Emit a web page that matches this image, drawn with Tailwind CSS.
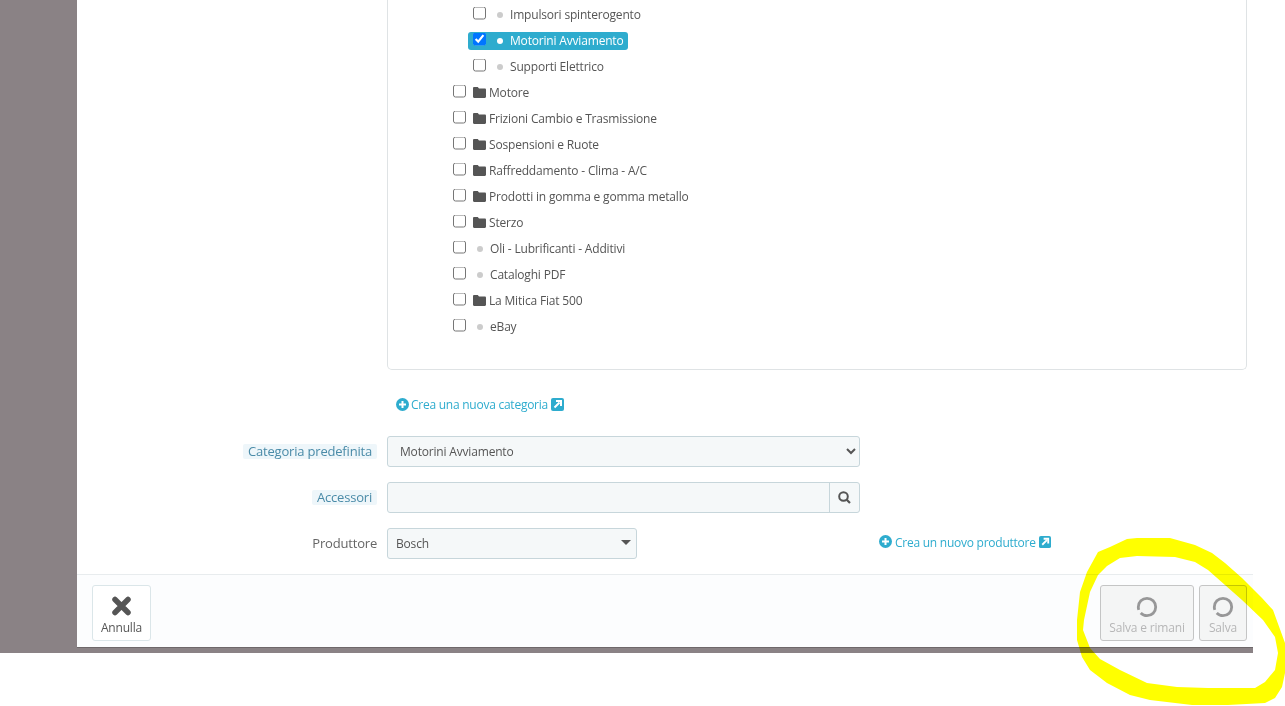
<!DOCTYPE html>
<html lang="it">
<head>
<meta charset="utf-8">
<title>Prodotto</title>
<script src="https://cdn.jsdelivr.net/npm/@tailwindcss/browser@4"></script>
</head>
<body class="bg-white">
<div class="relative h-[706px] w-[1285px] overflow-hidden bg-white font-['Open_Sans',sans-serif] text-[12px] tracking-[-0.18px] text-[#555]">
  <div class="h-[653px] w-[1253px] bg-[#8a8285] pl-[77px]">
    <div class="flex h-[647px] flex-col bg-white shadow-[0_1px_0_rgba(0,0,0,0.2)]">
      <div class="flex-1">
        <div class="ml-[310px] mr-[6px] h-[370px] rounded-b-[5px] border-x border-b border-[#dfe3e5] pt-[2px]">
          <div class="flex h-[26px] items-center pl-[85px]"><input type="checkbox" class="size-[13px] -translate-y-[2.5px]"><span class="ml-[11px] size-[6px] rounded-full bg-[#ccc]"></span><span class="ml-[7px]">Impulsori spinterogento</span></div>
          <div class="flex h-[26px] items-center pl-[80px]"><div class="relative flex h-[18px] items-center rounded-[3px] bg-[#2eacce] pl-[5px] pr-[4px] text-white"><input type="checkbox" checked class="size-[13px] -translate-y-[2.5px]"><span class="ml-[11px] size-[6px] rounded-full bg-white"></span><span class="ml-[7px]">Motorini Avviamento</span></div></div>
          <div class="flex h-[26px] items-center pl-[85px]"><input type="checkbox" class="size-[13px] -translate-y-[2.5px]"><span class="ml-[11px] size-[6px] rounded-full bg-[#ccc]"></span><span class="ml-[7px]">Supporti Elettrico</span></div>

          <div class="flex h-[26px] items-center pl-[65px]"><input type="checkbox" class="size-[13px] -translate-y-[2.5px]"><svg class="ml-[7px] -translate-y-[1px]" width="13" height="11" viewBox="0 0 13 11"><path fill="#555" d="M1.2 0h3.6l1.2 1.6h5.8c.7 0 1.2.5 1.2 1.2v7c0 .7-.5 1.2-1.2 1.2H1.2C.5 11 0 10.500 0 9.800V1.200C0 .5.500 0 1.200 0z"/></svg><span class="ml-[3px]">Motore</span></div>
          <div class="flex h-[26px] items-center pl-[65px]"><input type="checkbox" class="size-[13px] -translate-y-[2.5px]"><svg class="ml-[7px] -translate-y-[1px]" width="13" height="11" viewBox="0 0 13 11"><path fill="#555" d="M1.2 0h3.6l1.2 1.6h5.8c.7 0 1.2.5 1.2 1.2v7c0 .7-.5 1.2-1.2 1.2H1.2C.5 11 0 10.500 0 9.800V1.200C0 .5.500 0 1.200 0z"/></svg><span class="ml-[3px]">Frizioni Cambio e Trasmissione</span></div>
          <div class="flex h-[26px] items-center pl-[65px]"><input type="checkbox" class="size-[13px] -translate-y-[2.5px]"><svg class="ml-[7px] -translate-y-[1px]" width="13" height="11" viewBox="0 0 13 11"><path fill="#555" d="M1.2 0h3.6l1.2 1.6h5.8c.7 0 1.2.5 1.2 1.2v7c0 .7-.5 1.2-1.2 1.2H1.2C.5 11 0 10.500 0 9.800V1.200C0 .5.500 0 1.200 0z"/></svg><span class="ml-[3px]">Sospensioni e Ruote</span></div>
          <div class="flex h-[26px] items-center pl-[65px]"><input type="checkbox" class="size-[13px] -translate-y-[2.5px]"><svg class="ml-[7px] -translate-y-[1px]" width="13" height="11" viewBox="0 0 13 11"><path fill="#555" d="M1.2 0h3.6l1.2 1.6h5.8c.7 0 1.2.5 1.2 1.2v7c0 .7-.5 1.2-1.2 1.2H1.2C.5 11 0 10.500 0 9.800V1.200C0 .5.500 0 1.200 0z"/></svg><span class="ml-[3px]">Raffreddamento - Clima - A/C</span></div>
          <div class="flex h-[26px] items-center pl-[65px]"><input type="checkbox" class="size-[13px] -translate-y-[2.5px]"><svg class="ml-[7px] -translate-y-[1px]" width="13" height="11" viewBox="0 0 13 11"><path fill="#555" d="M1.2 0h3.6l1.2 1.6h5.8c.7 0 1.2.5 1.2 1.2v7c0 .7-.5 1.2-1.2 1.2H1.2C.5 11 0 10.500 0 9.800V1.200C0 .5.500 0 1.200 0z"/></svg><span class="ml-[3px]">Prodotti in gomma e gomma metallo</span></div>
          <div class="flex h-[26px] items-center pl-[65px]"><input type="checkbox" class="size-[13px] -translate-y-[2.5px]"><svg class="ml-[7px] -translate-y-[1px]" width="13" height="11" viewBox="0 0 13 11"><path fill="#555" d="M1.2 0h3.6l1.2 1.6h5.8c.7 0 1.2.5 1.2 1.2v7c0 .7-.5 1.2-1.2 1.2H1.2C.5 11 0 10.500 0 9.800V1.200C0 .5.500 0 1.200 0z"/></svg><span class="ml-[3px]">Sterzo</span></div>
          <div class="flex h-[26px] items-center pl-[65px]"><input type="checkbox" class="size-[13px] -translate-y-[2.5px]"><span class="ml-[11px] size-[6px] rounded-full bg-[#ccc]"></span><span class="ml-[7px]">Oli - Lubrificanti - Additivi</span></div>
          <div class="flex h-[26px] items-center pl-[65px]"><input type="checkbox" class="size-[13px] -translate-y-[2.5px]"><span class="ml-[11px] size-[6px] rounded-full bg-[#ccc]"></span><span class="ml-[7px]">Cataloghi PDF</span></div>
          <div class="flex h-[26px] items-center pl-[65px]"><input type="checkbox" class="size-[13px] -translate-y-[2.5px]"><svg class="ml-[7px] -translate-y-[1px]" width="13" height="11" viewBox="0 0 13 11"><path fill="#555" d="M1.2 0h3.6l1.2 1.6h5.8c.7 0 1.2.5 1.2 1.2v7c0 .7-.5 1.2-1.2 1.2H1.2C.5 11 0 10.500 0 9.800V1.200C0 .5.500 0 1.200 0z"/></svg><span class="ml-[3px]">La Mitica Fiat 500</span></div>
          <div class="flex h-[26px] items-center pl-[65px]"><input type="checkbox" class="size-[13px] -translate-y-[2.5px]"><span class="ml-[11px] size-[6px] rounded-full bg-[#ccc]"></span><span class="ml-[7px]">eBay</span></div>
        </div>

        <div class="ml-[319px] mt-[25px] flex h-[18px] items-center tracking-[-0.25px] text-[#2eacce]">
          <svg width="13" height="13" viewBox="0 0 13 13"><circle cx="6.500" cy="6.500" r="6.500" fill="#2eacce"/><path d="M6.500 3v7M3 6.500h7" stroke="#fff" stroke-width="2"/></svg>
          <span class="ml-[2px] translate-y-[1px]">Crea una nuova categoria</span>
          <svg class="ml-[3px]" width="13" height="13" viewBox="0 0 13 13"><rect width="13" height="13" rx="2" fill="#2eacce"/><path d="M3.500 9.500 8.500 4.500M5 3h5v5" stroke="#fff" stroke-width="2" fill="none"/></svg>
        </div>

        <div class="mt-[23px] flex h-[31px] items-center">
          <div class="flex w-[300px] justify-end"><span class="h-[15px] rounded-[2px] bg-[#eef6fa] px-[5px] text-[13px] leading-[15px] tracking-[-0.19px] text-[#4a8ba8]">Categoria predefinita</span></div>
          <select class="ml-[10px] h-[31px] w-[473px] rounded-[3px] border border-[#c7d6db] bg-[#f5f8f9] pl-[8px] text-[12px] text-[#555]"><option>Motorini Avviamento</option></select>
        </div>
        <div class="mt-[15px] flex h-[31px] items-center">
          <div class="flex w-[300px] justify-end"><span class="h-[15px] rounded-[2px] bg-[#eef6fa] px-[5px] text-[13px] leading-[15px] tracking-[-0.19px] text-[#4a8ba8]">Accessori</span></div>
          <div class="ml-[10px] flex h-[31px] w-[473px] rounded-[3px] border border-[#c7d6db] bg-[#f5f8f9]">
            <div class="flex-1"></div>
            <div class="flex w-[30px] items-center justify-center border-l border-[#c7d6db]"><svg width="13" height="13" viewBox="0 0 13 13"><circle cx="5.500" cy="5.500" r="4.300" fill="none" stroke="#555" stroke-width="2"/><path d="M8.700 8.700 12 12" stroke="#555" stroke-width="2.200"/></svg></div>
          </div>
        </div>
        <div class="mt-[15px] flex h-[31px] items-center">
          <div class="flex w-[300px] justify-end"><span class="text-[13px] tracking-[-0.19px] text-[#666]">Produttore</span></div>
          <div class="ml-[10px] flex h-[31px] w-[250px] items-center justify-between rounded-[3px] border border-[#c7d6db] bg-[#f5f8f9] pl-[8px] pr-[5px]"><span>Bosch</span><svg width="10" height="5" viewBox="0 0 10 5" class="-translate-y-[1px]"><path d="M0 0h10L5 5z" fill="#555"/></svg></div>
          <div class="ml-[242px] flex -translate-y-[2px] items-center tracking-[-0.25px] text-[#2eacce]">
            <svg width="13" height="13" viewBox="0 0 13 13"><circle cx="6.500" cy="6.500" r="6.500" fill="#2eacce"/><path d="M6.500 3v7M3 6.500h7" stroke="#fff" stroke-width="2"/></svg>
            <span class="ml-[3px] translate-y-[1px]">Crea un nuovo produttore</span>
            <svg class="ml-[3px]" width="12" height="12" viewBox="0 0 13 13"><rect width="13" height="13" rx="2" fill="#2eacce"/><path d="M3.500 9.500 8.500 4.500M5 3h5v5" stroke="#fff" stroke-width="2" fill="none"/></svg>
          </div>
        </div>
      </div>

      <div class="flex h-[73px] items-start justify-between border-t border-[#e8ecee] bg-[#fcfdfe] pl-[15px] pr-[6px] pt-[10px]">
        <button class="flex h-[56px] w-[59px] flex-col items-center rounded-[3px] border border-[#dbe6e9] bg-white pt-[10px] text-[12px] text-[#555]">
          <svg width="20" height="20" viewBox="0 0 20 20" class="-translate-x-[0.5px]"><path d="M3.500 3.500 16.500 16.500M16.500 3.500 3.500 16.500" stroke="#555" stroke-width="5.500" stroke-linecap="round"/></svg>
          <span class="mt-[4px] leading-[15px]">Annulla</span>
        </button>
        <div class="flex gap-[5px] opacity-60">
          <button class="flex h-[56px] w-[94px] flex-col items-center rounded-[3px] border border-[#a0a0a0] bg-[#f0f0f0] pt-[10px] text-[12px] text-[#888]">
            <svg width="22" height="22" viewBox="0 0 22 22"><circle cx="11" cy="11" r="8.700" fill="none" stroke="#555" stroke-width="2.800" stroke-dasharray="51 3.660" stroke-dashoffset="-24.200"/></svg>
            <span class="mt-[2px] leading-[15px]">Salva e rimani</span>
          </button>
          <button class="flex h-[56px] w-[48px] flex-col items-center rounded-[3px] border border-[#a0a0a0] bg-[#f0f0f0] pt-[10px] text-[12px] text-[#888]">
            <svg width="22" height="22" viewBox="0 0 22 22"><circle cx="11" cy="11" r="8.700" fill="none" stroke="#555" stroke-width="2.800" stroke-dasharray="51 3.660" stroke-dashoffset="-24.200"/></svg>
            <span class="mt-[2px] leading-[15px]">Salva</span>
          </button>
        </div>
      </div>
    </div>
  </div>

  <svg class="absolute left-0 top-0 mix-blend-multiply" width="1285" height="706" viewBox="0 0 1285 706">
    <path fill="#ffff00" fill-rule="evenodd" d="M1077 620L1080 592L1087 572L1098 552L1110 547L1127 539L1137 538L1170 538L1195 545L1212 553L1225 563L1242 578L1262 598L1273 610L1285 643L1285 673L1282 687L1275 698L1265 703L1228 705L1192 705L1150 700L1130 695L1107 683L1090 670L1082 657L1077 640Z M1084 620L1083 630L1090 648L1100 659L1120 670L1147 683L1177 687L1208 688L1255 688L1265 682L1275 670L1278 653L1275 637L1263 620L1242 600L1225 585L1208 570L1195 562L1175 557L1137 556L1120 558L1107 566L1098 575L1090 592Z"/>
  </svg>
</div>
</body>
</html>
